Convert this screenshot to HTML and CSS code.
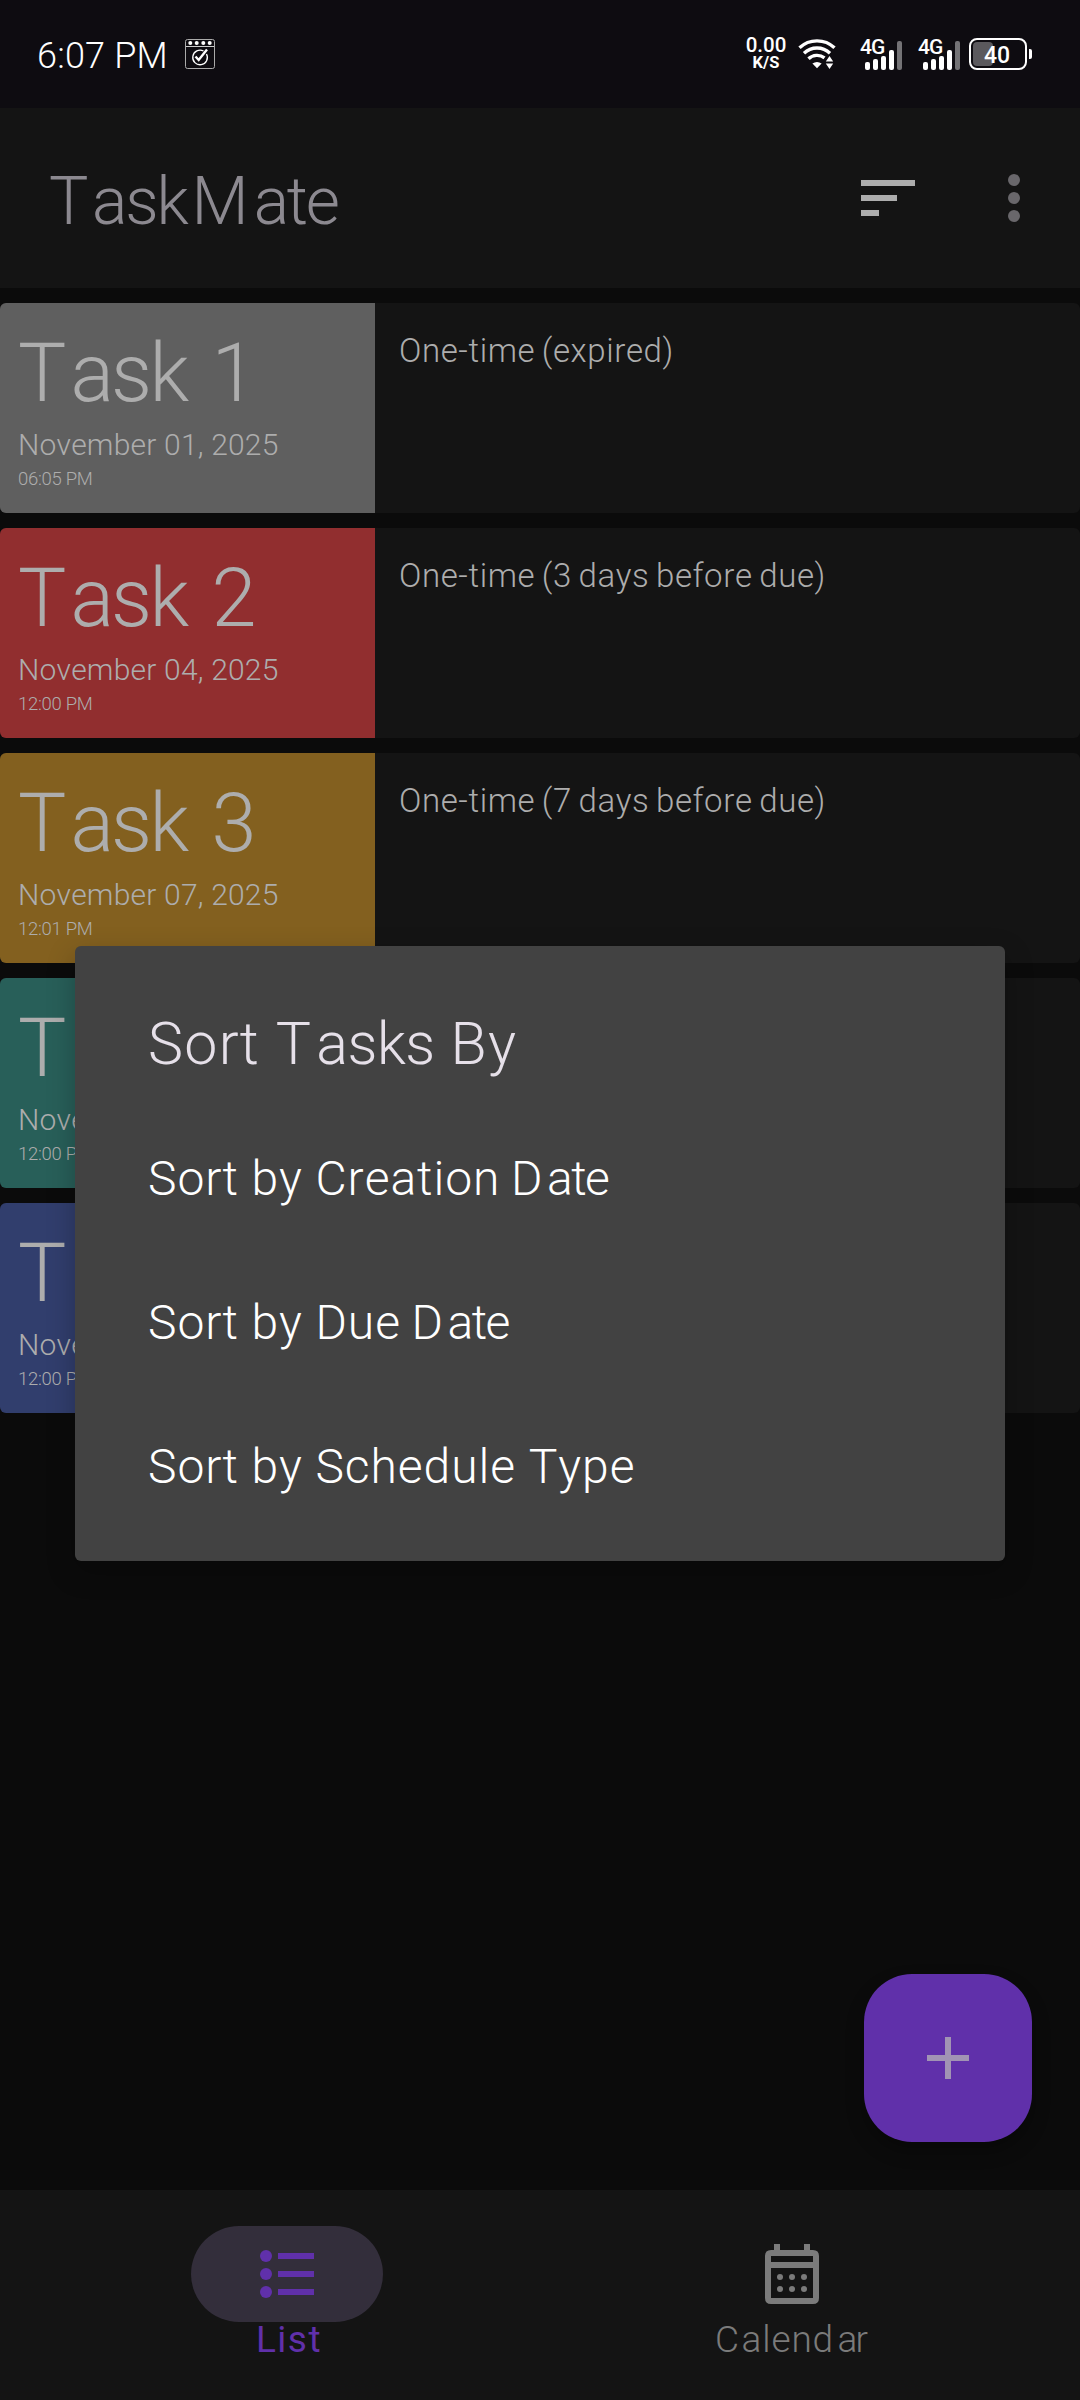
FILE: index.html
```html
<!DOCTYPE html>
<html lang="en">
<head>
<meta charset="utf-8">
<title>TaskMate</title>
<link rel="stylesheet" href="styles.css">
</head>
<body>
<div class="screen">
  <div class="status">
    <span class="clock">6:07 PM</span>
    <svg class="task-icon" width="30" height="30" viewBox="0 0 30 30" fill="none" stroke="#fff">
      <rect x=".5" y=".5" width="29" height="29" rx="2" stroke="#aaa"/>
      <path d="M1 7.5h28" stroke="#ccc"/>
      <g fill="#fff" stroke="none"><circle cx="5.3" cy="4" r="2"/><circle cx="11.7" cy="4" r="2"/><circle cx="18.3" cy="4" r="2"/><circle cx="24.7" cy="4" r="2"/></g>
      <path d="M18.500 12a7.300 7.300 0 1 0 3 3" stroke-width="1.300"/>
      <path d="M10.500 17.500l3.200 3.500L22 10.500" stroke-width="2.400"/>
    </svg>
    <div class="speed"><span class="rate">0.00</span><span class="unit">K/S</span></div>
    <svg class="wifi" width="38" height="32" viewBox="0 0 38 32" fill="none" stroke="#fff" stroke-width="3.400">
      <path d="M1.500 9.800a25.500 25.500 0 0 1 35 0"/>
      <path d="M6 15.200a19 19 0 0 1 26 0"/>
      <path d="M10.500 20.800a12.500 12.500 0 0 1 16-1"/>
      <path d="M19 30.200l-4.600-4.600q4.600-3 9.200 0z" fill="#fff" stroke="none"/>
      <path d="M31.500 18l3.700 5.500h-7.400zM31.500 31l3.700-5.500h-7.400z" fill="#fff" stroke="none"/>
    </svg>
    <svg class="signal" width="42" height="34" viewBox="0 0 42 34">
      <text class="net" x="0" y="16.500">4G</text>
      <g fill="#fff"><rect x="5" y="25" width="5" height="8" rx="2"/><rect x="13" y="22" width="5" height="11" rx="2"/><rect x="21" y="19" width="5" height="14" rx="2"/><rect x="29" y="13" width="5" height="20" rx="2"/></g>
      <rect x="37" y="4" width="5" height="29" rx="2" fill="#747376"/>
    </svg>
    <svg class="signal second" width="42" height="34" viewBox="0 0 42 34">
      <text class="net" x="0" y="16.500">4G</text>
      <g fill="#fff"><rect x="5" y="25" width="5" height="8" rx="2"/><rect x="13" y="22" width="5" height="11" rx="2"/><rect x="21" y="19" width="5" height="14" rx="2"/><rect x="29" y="13" width="5" height="20" rx="2"/></g>
      <rect x="37" y="4" width="5" height="29" rx="2" fill="#747376"/>
    </svg>
    <svg class="battery" width="64" height="32" viewBox="0 0 64 32">
      <rect x="1" y="1" width="56" height="30" rx="7" fill="none" stroke="#fff" stroke-width="2"/>
      <rect x="4" y="4" width="20" height="24" rx="4" fill="#5b595d"/>
      <path d="M60 11h1q2 0 2 2v6q0 2-2 2h-1z" fill="#fff"/>
      <text class="level" x="28" y="24.500" text-anchor="middle">40</text>
    </svg>
  </div>

  <header class="appbar">
    <h1><span class="t">T</span><span class="tight">ask</span><span class="m">M</span><span class="tight">ate</span></h1>
    <svg class="sort" width="72" height="72" viewBox="0 0 24 24" fill="#adadad"><path d="M3 6h18v2H3zM3 11h12v2H3zM3 16h6v2H3z"/></svg>
    <svg class="more" width="72" height="72" viewBox="0 0 24 24" fill="#69676b"><circle cx="12" cy="6" r="2"/><circle cx="12" cy="12" r="2"/><circle cx="12" cy="18" r="2"/></svg>
  </header>

  <main class="tasks">
    <article class="card">
      <div class="due gray"><h2><span class="t">T</span><span class="tight">ask</span> 1</h2><p class="date">November 01, 2025</p><p class="time">06:05 PM</p></div>
      <p class="desc">One-time (expired)</p>
    </article>
    <article class="card">
      <div class="due red"><h2><span class="t">T</span><span class="tight">ask</span> 2</h2><p class="date">November 04, 2025</p><p class="time">12:00 PM</p></div>
      <p class="desc">One-time (3 days before due)</p>
    </article>
    <article class="card">
      <div class="due amber"><h2><span class="t">T</span><span class="tight">ask</span> 3</h2><p class="date">November 07, 2025</p><p class="time">12:01 PM</p></div>
      <p class="desc">One-time (7 days before due)</p>
    </article>
    <article class="card">
      <div class="due teal"><h2><span class="t">T</span></h2><p class="date">November</p><p class="time">12:00 PM</p></div>
    </article>
    <article class="card">
      <div class="due blue"><h2><span class="t">T</span></h2><p class="date">November</p><p class="time">12:00 PM</p></div>
    </article>
  </main>

  <nav class="tabs">
    <div class="tab active">
      <div class="pill"><svg width="72" height="72" viewBox="0 0 24 24" fill="#6030aa"><circle cx="5" cy="6" r="2"/><circle cx="5" cy="12" r="2"/><circle cx="5" cy="18" r="2"/><path d="M9 5h12v2H9zM9 11h12v2H9zM9 17h12v2H9z"/></svg></div>
      <span class="label list">List</span>
    </div>
    <div class="tab">
      <div class="pill"><svg width="72" height="72" viewBox="0 0 24 24" fill="#7b7b7b"><path fill-rule="evenodd" d="M6 2h2v2h8V2h2v2h1q2 0 2 2v14q0 2-2 2H5q-2 0-2-2V6q0-2 2-2h1zM5 6v2h14V6zM5 10v10h14V10z"/><circle cx="8" cy="13" r="1"/><circle cx="12" cy="13" r="1"/><circle cx="16" cy="13" r="1"/><circle cx="8" cy="17" r="1"/><circle cx="12" cy="17" r="1"/><circle cx="16" cy="17" r="1"/></svg></div>
      <span class="label"><span class="c">C</span>alen<span class="d">d</span><span class="r">a</span>r</span>
    </div>
  </nav>

  <div class="fab"><svg width="72" height="72" viewBox="0 0 24 24" fill="#a193b4"><path d="M11 5h2v6h6v2h-6v6h-2v-6H5v-2h6z"/></svg></div>

  <section class="dialog">
    <h3>Sort <span class="t">T</span><span class="tight">asks</span> By</h3>
    <ul>
      <li>Sort by Creation <span class="d">D</span><span class="tight">ate</span></li>
      <li>Sort by Due <span class="d">D</span><span class="tight">ate</span></li>
      <li>Sort by Schedule Type</li>
    </ul>
  </section>
</div>
</body>
</html>
```
FILE: styles.css
```css
* { box-sizing: border-box; margin: 0; padding: 0; }
body { background: #0b0b0b; font-family: Roboto, "Liberation Sans", sans-serif; font-weight: 300; font-kerning: none; }
h1, h2, h3 { font-weight: 300; }
svg { display: block; flex: none; overflow: visible; }
.screen { position: relative; width: 1080px; height: 2400px; display: flex; flex-direction: column; overflow: hidden; white-space: nowrap; }

.status { height: 108px; padding-left: 37px; display: flex; align-items: center; background: #0e0c11; color: #fff; }
.clock { width: 148px; padding-top: 4px; font-size: 36px; letter-spacing: .2px; }
.speed { width: 42px; margin-left: 530px; display: flex; flex-direction: column; align-items: center; font-weight: 500; }
.rate { font-size: 20.5px; line-height: 18px; }
.unit { font-size: 16.5px; line-height: 18px; font-weight: 700; }
.wifi { margin-left: 11px; }
.signal { margin-left: 24px; }
.signal.second { margin-left: 16px; }
.net { font-size: 21px; font-weight: 500; letter-spacing: -1px; fill: #fff; }
.battery { margin-left: 9px; }
.level { font-size: 23px; font-weight: 500; fill: #fff; }

.appbar { height: 180px; padding-left: 49px; padding-right: 30px; display: flex; align-items: center; background: #141414; color: #8c8990; }
.appbar h1 { flex: 1; padding-top: 7px; font-size: 66px; line-height: 80px; }
.appbar .t { letter-spacing: 3.600px; }
.appbar .m { margin-left: 5px; letter-spacing: 4.9px; }
.appbar .tight { letter-spacing: -2.2px; }
.more { margin-left: 54px; }

.tasks { flex: 1; padding-top: 15px; display: flex; flex-direction: column; gap: 15px; color: #adadad; }
.card { height: 210px; display: flex; align-items: flex-start; border-radius: 6px; overflow: hidden; background: #141414; }
.due { width: 375px; height: 210px; padding: 23px 0 0 18px; }
.due h2 { font-size: 81px; line-height: 96px; word-spacing: 5.300px; }
.due .t { letter-spacing: 4px; }
.due .tight { letter-spacing: -2.740px; }
.date { margin-top: 5px; font-size: 30px; line-height: 36px; letter-spacing: .2px; }
.time { margin-top: 5px; font-size: 18.500px; line-height: 22px; letter-spacing: -.3px; }
.desc { padding: 28px 0 0 24px; font-size: 33px; line-height: 40px; letter-spacing: .6px; word-spacing: -2px; }
.gray { background: #5f5f5f; }
.red { background: #912e2f; }
.amber { background: #83601f; }
.teal { background: #285f59; }
.blue { background: #313e6d; }

.tabs { height: 210px; padding: 36px 35.500px 0 34.500px; display: flex; background: #141414; color: #7b7b7b; }
.tab { flex: 1; display: flex; flex-direction: column; align-items: center; }
.pill { width: 192px; height: 96px; border-radius: 48px; display: flex; align-items: center; justify-content: center; }
.active .pill { background: #332e3b; }
.active { color: #6030aa; }
.label { margin-top: -2px; font-size: 37px; line-height: 40px; letter-spacing: .84px; }
.label.list { padding-left: 4px; font-weight: 400; letter-spacing: 1.5px; }
.label .c { letter-spacing: 2.500px; }
.label .d { letter-spacing: 4.400px; }
.label .r { letter-spacing: -1.800px; }

.fab { position: absolute; left: 864px; top: 1974px; width: 168px; height: 168px; border-radius: 48px; display: flex; align-items: center; justify-content: center; background: #6030aa; box-shadow: 0 9px 18px rgba(0, 0, 0, .3); }

.dialog { position: absolute; left: 75px; top: 946px; width: 930px; height: 615px; padding: 63px 0 0 73px; border-radius: 6px; background: #424242; color: #fff; box-shadow: 0 10px 28px rgba(0, 0, 0, .25); }
.dialog h3 { font-size: 59px; line-height: 70px; letter-spacing: 1.300px; color: #e6e0e9; }
.dialog .t { letter-spacing: 5.300px; }
.dialog .tight { letter-spacing: -.5px; }
.dialog ul { margin-top: 28px; list-style: none; }
.dialog li { font-size: 48px; line-height: 144px; letter-spacing: .95px; }
.dialog li .d { margin-left: -2px; letter-spacing: 4.500px; }
.dialog li .tight { letter-spacing: -1.600px; }
```
